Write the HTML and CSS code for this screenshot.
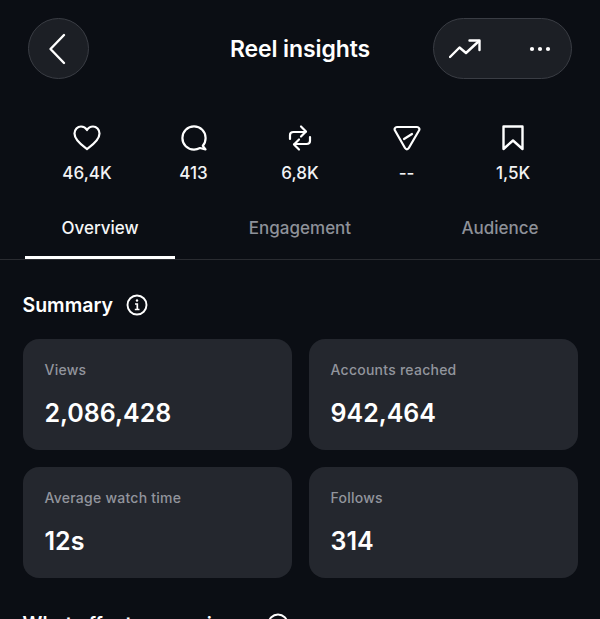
FILE: index.html
```html
<!DOCTYPE html>
<html lang="en">
<head>
    <meta charset="UTF-8">
    <meta name="viewport" content="width=device-width, initial-scale=1.0">
    <title>Reel insights</title>
    <link rel="stylesheet" href="styles.css">
</head>
<body>

    <!-- Header -->
    <header class="topbar">
        <button class="round-btn" type="button" aria-label="Back">
            <svg width="24" height="32" viewBox="0 0 24 32" fill="none" stroke="#fff" stroke-width="2.4" stroke-linecap="round" stroke-linejoin="round"><path d="M19 3 L5.5 17 L19 31" transform="translate(0,-1)"/></svg>
        </button>
        <h1>Reel insights</h1>
        <div class="pill">
            <svg width="32" height="20" viewBox="0 0 32 20" fill="none" stroke="#fff" stroke-width="2.4" stroke-linecap="round" stroke-linejoin="round"><path d="M1 18 L10.5 8.5 L17 14 L30 2"/><path d="M20.5 1.5 H30.5 V11"/></svg>
            <svg width="22" height="6" viewBox="0 0 22 6" fill="#fff"><circle cx="3" cy="3" r="2.1"/><circle cx="11" cy="3" r="2.1"/><circle cx="19" cy="3" r="2.1"/></svg>
        </div>
    </header>

    <!-- Counts -->
    <section class="stats">
        <div class="stat">
            <svg width="28" height="26" viewBox="0 0 28 26" fill="none" stroke="#fff" stroke-width="2.2" stroke-linejoin="round"><path d="M14 24 C10 21 1.5 15.500 1.500 8.500 C1.500 4.500 4.500 1.500 8 1.500 C10.500 1.500 12.700 2.800 14 5 C15.300 2.800 17.500 1.500 20 1.500 C23.500 1.500 26.500 4.500 26.500 8.500 C26.500 15.500 18 21 14 24 Z"/></svg>
            <span>46,4K</span>
        </div>
        <div class="stat">
            <svg width="26" height="26" viewBox="0 0 26 26" fill="none" stroke="#fff" stroke-width="2.2" stroke-linejoin="round"><path d="M24.500 24.500 L21.800 20.800 C23.600 18.800 24.600 16.200 24.600 13 C24.600 6.500 19.500 1.400 13 1.400 C6.500 1.400 1.400 6.500 1.400 13 C1.400 19.500 6.500 24.600 13 24.600 C15.200 24.600 17.200 24 19 23 Z"/></svg>
            <span>413</span>
        </div>
        <div class="stat">
            <svg width="24" height="28" viewBox="0 0 24 28" fill="none" stroke="#fff" stroke-width="2.2" stroke-linecap="round" stroke-linejoin="round"><path d="M2 15 V11 C2 9 3.500 8 5.500 8 H17.500"/><path d="M13 2.500 L18 7.500 L13 12.500"/><path d="M22 13 V17 C22 19 20.500 20 18.500 20 H6.500"/><path d="M11 15.500 L6 20.500 L11 25.500"/></svg>
            <span>6,8K</span>
        </div>
        <div class="stat">
            <svg width="28" height="26" viewBox="0 0 28 26" fill="none" stroke="#fff" stroke-width="2.2" stroke-linejoin="round" stroke-linecap="round"><path d="M4 2 H24 C26 2 27 4 26 5.500 L15.800 23 C14.800 24.700 13 24.700 12 23 L2 5.500 C1 4 2 2 4 2 Z"/><path d="M11 14 L19 9"/></svg>
            <span>--</span>
        </div>
        <div class="stat">
            <svg width="22" height="26" viewBox="0 0 22 26" fill="none" stroke="#fff" stroke-width="2.4" stroke-linejoin="round"><path d="M1.500 1.500 H20.500 V24 L11 15.500 L1.500 24 Z"/></svg>
            <span>1,5K</span>
        </div>
    </section>

    <!-- Tabs -->
    <nav class="tabs">
        <a class="tab active" href="#"><span>Overview</span></a>
        <a class="tab" href="#"><span>Engagement</span></a>
        <a class="tab" href="#"><span>Audience</span></a>
    </nav>

    <!-- Summary -->
    <main class="content">
        <h2 class="section-title">Summary
            <svg class="info" width="22" height="22" viewBox="0 0 22 22" fill="none" stroke="#fff" stroke-width="1.9"><circle cx="11" cy="11" r="9.500"/><path d="M9 10 H11.300 V15.500 M8.800 15.500 H13.500" stroke-width="1.700"/><circle cx="11" cy="6.500" r="1.200" fill="#fff" stroke="none"/></svg>
        </h2>
        <div class="cards">
            <div class="card">
                <p class="card-label">Views</p>
                <p class="card-value">2,086,428</p>
            </div>
            <div class="card">
                <p class="card-label">Accounts reached</p>
                <p class="card-value">942,464</p>
            </div>
            <div class="card">
                <p class="card-label">Average watch time</p>
                <p class="card-value">12s</p>
            </div>
            <div class="card">
                <p class="card-label">Follows</p>
                <p class="card-value">314</p>
            </div>
        </div>
        <h2 class="section-title next">What affects your views
            <svg class="info" width="22" height="22" viewBox="0 0 22 22" fill="none" stroke="#fff" stroke-width="1.9"><circle cx="11" cy="11" r="9.500"/></svg>
        </h2>
    </main>

</body>
</html>
```

FILE: styles.css
```css
/* Global Reset */
* { margin: 0; padding: 0; box-sizing: border-box; }

html, body { height: 619px; overflow: hidden; }

body {
    font-family: Inter, "Liberation Sans", sans-serif;
    background-color: #0b0e14;
    color: #fff;
}

/* Header */
.topbar {
    display: grid;
    grid-template-columns: 1fr auto 1fr;
    align-items: center;
    padding: 18px 28px 0;
}

.topbar h1 {
    text-align: center;
    font-size: 23px;
    font-weight: 600;
    letter-spacing: -0.1px;
}

.round-btn {
    width: 61px;
    height: 61px;
    display: flex;
    align-items: center;
    justify-content: center;
    border-radius: 50%;
    background-color: #1c1f25;
    border: 1px solid #3a3d44;
}

.round-btn svg { margin-right: 3px; }

.pill {
    width: 139px;
    height: 61px;
    justify-self: end;
    display: flex;
    align-items: center;
    justify-content: space-between;
    padding: 0 20px 0 15px;
    border-radius: 31px;
    background-color: #1c1f25;
    border: 1px solid #3a3d44;
}

/* Counts */
.stats {
    display: grid;
    grid-template-columns: repeat(5, 106.500px);
    justify-content: center;
    margin-top: 45px;
}

.stat {
    display: flex;
    flex-direction: column;
    align-items: center;
    gap: 11px;
    font-size: 17px;
    font-weight: 500;
    color: #f2f3f5;
    line-height: 21px;
}

.stat svg { height: 28px; }

/* Tabs */
.tabs {
    display: grid;
    grid-template-columns: repeat(3, 200px);
    border-bottom: 1px solid #2a2c31;
    margin-top: 33px;
}

.tab {
    display: block;
    padding: 0 25px;
    text-align: center;
    font-size: 17px;
    font-weight: 500;
    color: #8e9199;
    text-decoration: none;
}

.tab span {
    display: block;
    height: 42px;
    line-height: 22px;
}

.tab.active { color: #f5f6f7; }

.tab.active span {
    border-bottom: 3px solid #fff;
    margin-bottom: -1px;
}

/* Summary */
.content { padding: 31px 23px 0 22.500px; }

.section-title {
    display: flex;
    align-items: center;
    gap: 13px;
    font-size: 19.500px;
    font-weight: 600;
    line-height: 28px;
}

.section-title.next {
    margin-top: 32px;
    gap: 17px;
}

.cards {
    display: grid;
    grid-template-columns: 269px 269px;
    gap: 17px 17px;
    margin-top: 20px;
}

.card {
    height: 111px;
    padding: 22px 22px 0;
    border-radius: 16px;
    background-color: #24272e;
}

.card-label {
    font-size: 14px;
    font-weight: 500;
    line-height: 18px;
    letter-spacing: 0.25px;
    color: #92959d;
}

.card-value {
    margin-top: 18px;
    font-size: 25px;
    font-weight: 600;
    line-height: 32px;
    color: #fff;
}
```
